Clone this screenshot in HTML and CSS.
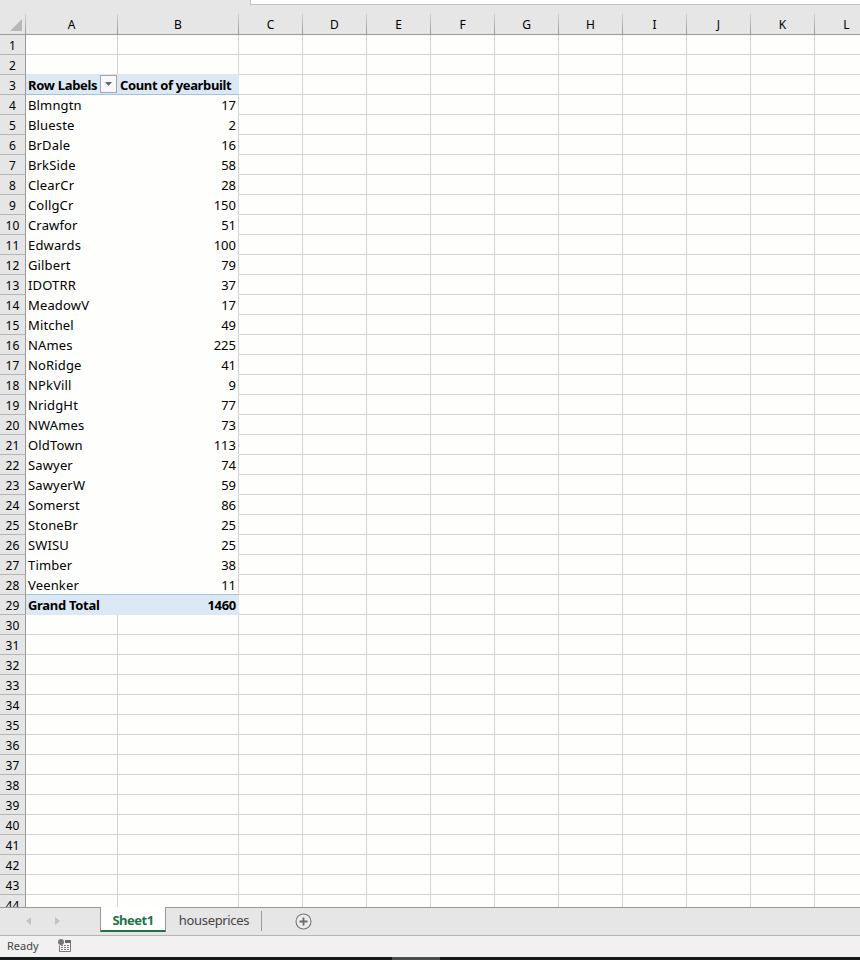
FILE: index.html
```html
<!DOCTYPE html>
<html lang="en">
<head>
<meta charset="utf-8">
<title>Sheet1</title>
<link rel="stylesheet" href="styles.css">
</head>
<body>
<div class="app">
  <div class="formula"><div class="formula-box"></div></div>
  <div class="sheet" id="sheet"></div>
  <div class="tabs">
    <div class="nav">
      <svg width="5" height="8" viewBox="0 0 5 8"><path d="M5 0v8L0 4z" fill="#c2c2c2"/></svg>
      <svg width="5" height="8" viewBox="0 0 5 8"><path d="M0 0v8l5-4z" fill="#c2c2c2"/></svg>
    </div>
    <div class="tab active"><span>Sheet1</span></div>
    <div class="tab other"><span>houseprices</span></div>
    <svg class="add" width="17" height="17" viewBox="0 0 17 17"><circle cx="8.5" cy="8.5" r="7.5" fill="#ececec" stroke="#777" stroke-width="1.1"/><path d="M8.5 4.5v8M4.5 8.5h8" stroke="#6c6c6c" stroke-width="1.8"/></svg>
  </div>
  <div class="status">
    <span class="ready">Ready</span>
    <svg class="macro" width="14" height="14" viewBox="0 0 14 14"><path d="M7 1h6v3H7z" fill="#666"/><path d="M1.5 6.5v6h11V4" fill="#fafafa" stroke="#777"/><path d="M3 6.5h2m1 0h2m1 0h2M3 8.5h2m1 0h2m1 0h2M3 10.5h2m1 0h2m1 0h2" stroke="#777"/><circle cx="3" cy="3" r="3" fill="#777"/></svg>
  </div>
  <div class="taskbar"><div class="task"></div></div>
</div>
<script src="sheet.js"></script>
</body>
</html>
```
FILE: styles.css
```css
* { box-sizing: border-box; }
body { margin: 0; background: #e6e6e6; font-family: "Noto Sans", "Open Sans", sans-serif; color: #000; }
.app { width: 860px; height: 960px; overflow: hidden; display: flex; flex-direction: column; }
.formula { height: 5px; padding-left: 250px; flex: none; }
.formula-box { height: 5px; background: #fdfdfd; border-left: 1px solid #c3c3c3; border-bottom: 1px solid #c3c3c3; }
.sheet { height: 902px; overflow: hidden; background: #fefefc; flex: none; }
.row { display: grid; grid-template-columns: 26px 92px 121px repeat(10, 64px); height: 20px; width: 879px; }
.cell { border-right: 1px solid #d3d3d3; border-bottom: 1px solid #d3d3d3; font-size: 13px; line-height: 20px; white-space: nowrap; padding: 0 2px; overflow: hidden; }
.head { height: 30px; background: #e6e6e6; }
.head .cell { border-bottom-color: #999; border-right: 0; padding: 10px 1px 0 0; text-align: center; font-size: 12px; background: linear-gradient(#cfcfcf, #999) right bottom / 1px 20px no-repeat; }
.corner { display: flex; justify-content: flex-end; align-items: flex-end; }
.head .corner { padding: 0 4px 3px 0; }
.row .num { background: #e6e6e6; border-right-color: #999; border-bottom-color: #b5b5b5; text-align: center; padding: 0; font-size: 12px; line-height: 21px; letter-spacing: .2px; }
.label { border-right: 0; border-bottom-color: transparent; letter-spacing: .15px; }
.value { border-bottom-color: transparent; text-align: right; }
.strong .label, .strong .value { background: #dce9f5; font-weight: 700; border-right: 0; letter-spacing: -.3px; }
.strong .value { padding-right: 3px; }
.title .label, .title .value { border-bottom-color: #9dc3e6; text-align: left; }
.title .value { letter-spacing: -.36px; }
.before-total .label, .before-total .value { border-bottom-color: #9dc3e6; }
.before-title .cell:nth-child(2), .before-title .cell:nth-child(3) { border-bottom-color: #dce9f5; }
.total .label, .total .value { border-bottom-color: #dce9f5; }
.title .label { display: flex; padding-right: 1px; justify-content: space-between; }
.filter { width: 17px; height: 18px; border: 1px solid #a6a6a6; background: #f8f9fc; display: flex; align-items: center; justify-content: center; }
.tabs { height: 28px; flex: none; border-top: 1px solid #999; display: flex; background: #e6e6e6; font-size: 13px; line-height: 25px; }
.nav { width: 100px; padding: 9px 0 0 26px; display: flex; gap: 24px; }
.tab { text-align: center; height: 25px; }
.active { width: 66px; margin-top: -1px; background: #fff; border: solid #999; border-width: 0 1px; border-bottom: 2px solid #217346; color: #217346; font-weight: 700; letter-spacing: -.5px; line-height: 26px; }
.other { width: 96px; color: #444; position: relative; letter-spacing: -.33px; }
.other::after { content: ""; position: absolute; right: 0; top: 3px; width: 1px; height: 20px; background: #999; }
.add { margin: 5px 0 0 33px; }
.status { height: 22px; flex: none; border-top: 1px solid #b5b5b5; background: #f1f1f1; display: flex; font-size: 11px; line-height: 20px; color: #444; }
.ready { width: 58px; padding-left: 7px; }
.macro { margin-top: 3px; }
.taskbar { height: 3px; background: #161a1b; padding-left: 392px; }
.task { width: 48px; height: 3px; background: #4b4e4f; }
```
FILE: sheet.js
```js
const names = ["Blmngtn","Blueste","BrDale","BrkSide","ClearCr","CollgCr","Crawfor","Edwards","Gilbert","IDOTRR","MeadowV","Mitchel","NAmes","NoRidge","NPkVill","NridgHt","NWAmes","OldTown","Sawyer","SawyerW","Somerst","StoneBr","SWISU","Timber","Veenker"];
const counts = [17,2,16,58,28,150,51,100,79,37,17,49,225,41,9,77,73,113,74,59,86,25,25,38,11];
const cell = (text, cls = "") => `<div class="cell ${cls}">${text}</div>`;
const blanks = n => cell("").repeat(n);
const corner = '<svg width="12" height="12" viewBox="0 0 12 12"><path d="M12 0v12H0z" fill="#b7b7b7"/></svg>';
const filter = '<span class="filter"><svg width="7" height="4" viewBox="0 0 7 4"><path d="M0 0h7L3.5 4z" fill="#666"/></svg></span>';
let html = `<div class="row head">${cell(corner, "corner")}${[..."ABCDEFGHIJKL"].map(c => cell(c)).join("")}</div>`;
for (let r = 1; r <= 44; r++) {
  let cls = r === 2 ? "before-title" : "", a = "", b = "";
  if (r === 3) { cls = "strong title"; a = `<span>Row Labels</span>${filter}`; b = "Count of yearbuilt"; }
  else if (r === 29) { cls = "strong total"; a = "Grand Total"; b = 1460; }
  else if (r > 3 && r < 29) { a = names[r - 4]; b = counts[r - 4]; if (r === 28) cls = "before-total"; }
  html += `<div class="row ${cls}">${cell(r, "num")}${a ? cell(a, "label") + cell(b, "value") : blanks(2)}${blanks(10)}</div>`;
}
document.getElementById("sheet").innerHTML = html;
```
